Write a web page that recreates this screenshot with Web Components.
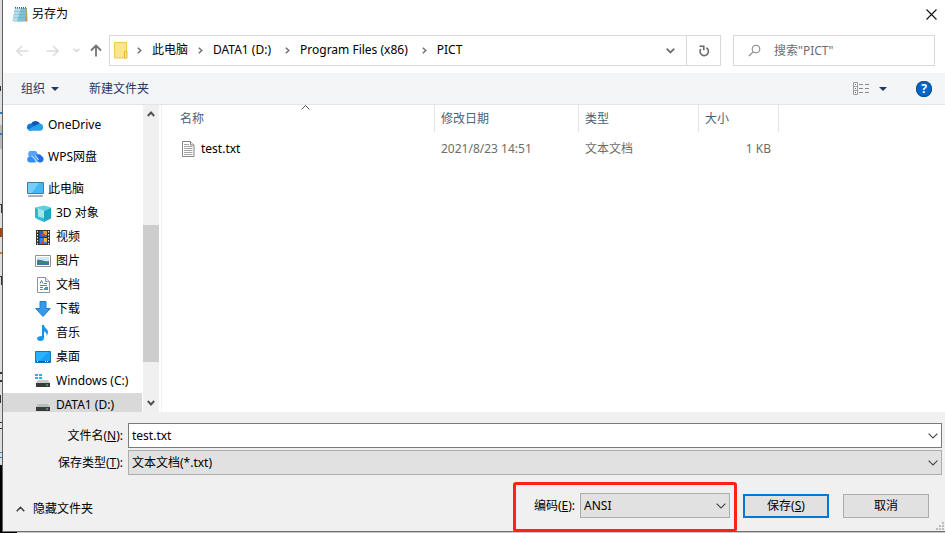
<!DOCTYPE html>
<html lang="zh-CN">
<head>
<meta charset="utf-8">
<title>另存为</title>
<style>
  html, body { margin: 0; height: 100%; }
  body {
    font: 12px/16px "Noto Sans", "Noto Sans CJK SC", sans-serif;
    color: #000;
    overflow: hidden;
  }
</style>
</head>
<body>
<save-desktop></save-desktop>

<script>
const icons = {
  notepad: `<svg width="16" height="17" viewBox="0 0 16 17"><path d="M4 2h11l.500 13.500H2z" fill="#b99a62"/><path d="M3 2h11.500L13 15H.500z" fill="#7fc0d2"/><path d="M3 2h6L5 15H.500z" fill="#b5dfe9"/><path d="M2.500 5.500h11M2.200 8.500h11M1.800 11.500h11" stroke="#66afc5" stroke-width=".5"/><path d="M3.500 1v1.500M5.500 1v1.500M7.500 1v1.500M9.500 1v1.500M11.500 1v1.500M13.500 1v1.500" stroke="#555" stroke-width="1"/></svg>`,
  close: `<svg width="11" height="11" viewBox="0 0 11 11"><path d="M.500.500l10 10M10.500.500l-10 10" stroke="#111" stroke-width="1.100"/></svg>`,
  back: `<svg width="13" height="12" viewBox="0 0 13 12"><path d="M12.500 6H1M6 1L1 6l5 5" fill="none" stroke="#dcdcdc" stroke-width="1.600"/></svg>`,
  forward: `<svg width="13" height="12" viewBox="0 0 13 12"><path d="M.500 6H12M7 1l5 5-5 5" fill="none" stroke="#dcdcdc" stroke-width="1.600"/></svg>`,
  recent: `<svg width="7" height="5" viewBox="0 0 7 5"><path d="M.700.700l2.800 2.800L6.300.700" fill="none" stroke="#d4d4d4" stroke-width="1.400"/></svg>`,
  up: `<svg width="12" height="13" viewBox="0 0 12 13"><path d="M6 12.500V1.500M1 6.500l5-5 5 5" fill="none" stroke="#737373" stroke-width="1.800"/></svg>`,
  folder: `<svg width="14" height="17" viewBox="0 0 14 17"><path d="M.500.500h12v15.500H.500z" fill="#ffe48f" stroke="#f0c94a"/><path d="M10.500 9.500h2.500v6.500h-2.500z" fill="#ffe48f" stroke="#e7b92e"/></svg>`,
  crumb: `<svg width="5" height="7" viewBox="0 0 5 7"><path d="M.800.700l3 2.800-3 2.800" fill="none" stroke="#6b6b6b" stroke-width="1.400"/></svg>`,
  drop: `<svg width="9" height="6" viewBox="0 0 9 6"><path d="M.700.700l3.800 3.800L8.300.700" fill="none" stroke="#6f6f6f" stroke-width="1.800"/></svg>`,
  refresh: `<svg width="12" height="12" viewBox="0 0 12 12"><path d="M8.300 2.800A4.200 4.200 0 1 1 2.800 4" fill="none" stroke="#6b6b6b" stroke-width="1.600"/><path d="M1.500 1.300h4.300v4" fill="none" stroke="#6b6b6b" stroke-width="1.600"/></svg>`,
  search: `<svg width="13" height="13" viewBox="0 0 13 13"><circle cx="8" cy="5" r="3.900" fill="none" stroke="#858585"/><path d="M5.200 7.800L.800 12.200" stroke="#858585" stroke-width="1.200"/></svg>`,
  triangle: `<svg width="8" height="4" viewBox="0 0 8 4"><path d="M0 0h8L4 4z" fill="#1f3864"/></svg>`,
  view: `<svg width="17" height="13" viewBox="0 0 17 13"><path d="M.500.500h4v12h-4zM.500 4.500h4M.500 8.500h4" fill="#fff" stroke="#9a9a9a"/><path d="M2 2.500h1M2 6.500h1" stroke="#668"/><path d="M2 10.500h1" stroke="#a22"/><path d="M6 2.500h4M12 2.500h4M6 6.500h4M12 6.500h4M6 10.500h4M12 10.500h4" stroke="#8a8a8a"/></svg>`,
  onedrive: `<svg width="17" height="11" viewBox="0 0 17 11"><path d="M4 4a5 5 0 0 1 9-.500L9 8 2 6z" fill="#0a58b0"/><path d="M3.800 3.600C1.500 3.600 0 5.200 0 7.200s1.500 3.600 3.600 3.600L10 7z" fill="#0f75d1"/><path d="M13 3.500a3.700 3.700 0 0 1 0 7.300H3.600C2.500 10.800 1.500 10.300.800 9.500L10 4.800z" fill="#28a0ea"/></svg>`,
  wps: `<svg width="17" height="12" viewBox="0 0 17 12"><path d="M1.500 5a4.500 4.500 0 0 1 8.500-3.500L14 11H9z" fill="#55a5fa"/><path d="M8.500 4.500a4 4 0 0 1 6.300.500 3.500 3.500 0 0 1-.800 6.500h-2z" fill="#256fe5"/><path d="M3 5.500a3 3 0 0 0 .500 6H9L5 5.500z" fill="#348df5"/><path d="M4.500 5.500c2 0 3.500 3 5.500 6M8.500 4.500l3 4.500" fill="none" stroke="#e7f3ff"/></svg>`,
  pc: `<svg width="17" height="15" viewBox="0 0 17 15"><path d="M.500.500h16v11H.500z" fill="#42b8f6" stroke="#4a7897"/><path d="M1 1h11L5 11H1z" fill="#75cdfb"/><path d="M1 14h15" stroke="#8d9aa7" stroke-width="1.500"/></svg>`,
  cube: `<svg width="17" height="17" viewBox="0 0 17 17"><path d="M0 2.500l9-2 7 2-7 3.500z" fill="#5cd0df"/><path d="M0 2.500L9 6v11l-9-4z" fill="#a5e6ee"/><path d="M9 6l7-3.500v11L9 17z" fill="#1ba6c4"/><path d="M0 2.500L3 4v10L0 12.500z" fill="#2cb8d0"/><path d="M3 11.500L9 13v4l-7-3z" fill="#35bcd3"/></svg>`,
  video: `<svg width="15" height="15" viewBox="0 0 15 15"><path d="M0 0h14v15H0z" fill="#333"/><path d="M3.500 1h7.500v6H3.500z" fill="#365eb3"/><path d="M3.500 8h7.500v6H3.500z" fill="#4a7bd6"/><path d="M7 1h4v4H8z" fill="#e0a52e"/><path d="M5 4h4v2H5zM5 11h3v3H5z" fill="#bb4d36"/><path d="M8 8h3v4H8z" fill="#e5ba43"/><path d="M1.500 1v14M12.500 1v14" stroke="#eee" stroke-dasharray="1.500 1.500"/></svg>`,
  picture: `<svg width="16" height="12" viewBox="0 0 16 12"><path d="M.500.500h15v11H.500z" fill="#fff" stroke="#929292"/><path d="M2 2h12v8H2z" fill="#cfe9fa"/><path d="M2 5c4-1 7 2 12 1v4H2z" fill="#3f817d"/><path d="M2 9c4-2 8-1 12-1v2H2z" fill="#3f77a8"/></svg>`,
  doc: `<svg width="13" height="16" viewBox="0 0 13 16"><path d="M.500.500h8l4 4v11H.500z" fill="#fff" stroke="#929292"/><path d="M8.500.500v4h4" fill="#eee" stroke="#929292"/><path d="M3 6.500l1.500-3L6 6.500M7 6.500h3M3 8.500h7M3 10.500h3M8 10.500h3M3 12.500h3" fill="none" stroke="#318dcc"/><path d="M7 11h4v2H7z" fill="#4c97b6"/></svg>`,
  down: `<svg width="16" height="16" viewBox="0 0 16 16"><path d="M5 .500h6v7h4.300L8 15.500.700 7.500H5z" fill="#3798ea" stroke="#267cc6"/></svg>`,
  music: `<svg width="12" height="16" viewBox="0 0 12 16"><path d="M5 0h2c0 3 4 4 4 7 0 2-1 3-1.500 4 .500-3-1-4-2.500-4.500V13c0 2-1.500 3-3.500 3S0 15 0 13.500 2 11 5 11z" fill="#1496f0"/></svg>`,
  desktop: `<svg width="16" height="12" viewBox="0 0 16 12"><path d="M.500.500h15v11H.500z" fill="#16a0fa" stroke="#1577bb"/><path d="M1 1h13L4 10H1z" fill="#2fb0ff"/><path d="M1 10.500h14" stroke="#07588f"/><path d="M2 10.500h1M10 10.500h1M12 10.500h1" stroke="#fff"/></svg>`,
  windrive: `<svg width="16" height="14" viewBox="0 0 16 14"><path d="M0 0h3v2H0zM4 0h3v2H4zM0 3h3v2H0zM4 3h3v2H4z" fill="#19b5ee"/><path d="M3 6h10l2 3H1z" fill="#c9c9c9"/><path d="M1 9h14v4H1z" fill="#3b3b3b"/><path d="M11 11h2" stroke="#58e06b"/></svg>`,
  drive: `<svg width="14" height="14" viewBox="0 0 14 14"><path d="M2 6h10l2 3H0z" fill="#bcbcbc"/><path d="M0 9h14v4H0z" fill="#3b3b3b"/><path d="M10 11h2" stroke="#58e06b"/></svg>`,
  text: `<svg width="13" height="16" viewBox="0 0 13 16"><path d="M.500.500h8l3.500 3.500v11.500H.500z" fill="#fff" stroke="#838383"/><path d="M8.500.500v3.500h3.500" fill="#eee" stroke="#838383"/><path d="M2 3.500h5M2 5.500h8.500M2 7.500h8.500M2 9.500h8.500M2 11.500h8.500M2 13.500h8.500" stroke="#a3a3a3"/></svg>`,
  sort: `<svg width="9" height="5" viewBox="0 0 9 5"><path d="M.500 4.500l4-4 4 4" fill="none" stroke="#555"/></svg>`,
  chevron: `<svg width="10" height="6" viewBox="0 0 10 6"><path d="M.600.600L5 5 9.400.600" fill="none" stroke="#444" stroke-width="1.100"/></svg>`,
  scrollUp: `<svg width="8" height="6" viewBox="0 0 8 6"><path d="M.800 5L4 1.500 7.200 5" fill="none" stroke="#505050" stroke-width="1.900"/></svg>`,
  scrollDown: `<svg width="8" height="6" viewBox="0 0 8 6"><path d="M.800 1L4 4.500 7.200 1" fill="none" stroke="#505050" stroke-width="1.900"/></svg>`,
  collapse: `<svg width="9" height="6" viewBox="0 0 9 6"><path d="M.700 5.200l3.800-3.800 3.800 3.800" fill="none" stroke="#404040" stroke-width="1.500"/></svg>`,
  grip: `<svg width="9" height="9" viewBox="0 0 9 9"><path d="M6 0h2v2H6zM3 3h2v2H3zM6 3h2v2H6zM0 6h2v2H0zM3 6h2v2H3zM6 6h2v2H6z" fill="#bdbdbd"/></svg>`
};

const base = `
  * { box-sizing: border-box; }
  button, input, select { font: inherit; color: inherit; margin: 0; border-radius: 0; }
  button { padding: 0; border: 0; background: none; }
`;

function define(name, css, html) {
  const template = document.createElement('template');
  template.innerHTML = `<style>${base}${css}</style>${html}`;
  customElements.define(name, class extends HTMLElement {
    constructor() {
      super();
      this.attachShadow({ mode: 'open' }).append(template.content.cloneNode(true));
    }
  });
}

customElements.define('ui-icon', class extends HTMLElement {
  connectedCallback() {
    if (this.shadowRoot) return;
    this.attachShadow({ mode: 'open' }).innerHTML =
      `<style>:host{display:inline-flex;align-items:center;justify-content:center;flex:none}svg{display:block}</style>${icons[this.getAttribute('name')]}`;
    this.setAttribute('aria-hidden', 'true');
  }
});

define('tree-item', `
  :host { display: block; flex: none; }
  button { display: flex; align-items: center; gap: 4px; width: 100%; height: 24px; padding-left: 23px; text-align: left; white-space: nowrap; }
  :host([child]) button { padding-left: 31px; }
  :host([selected]) button { background: #d9d9d9; }
  ::slotted(ui-icon) { width: 18px; }
`, `<button type="button"><slot name="icon"></slot><span><slot></slot></span></button>`);

define('title-bar', `
  :host { display: flex; align-items: center; height: 28px; padding: 0 8px 0 9px; flex: none; }
  h1 { font: inherit; margin: 0 auto 0 4px; }
  button { display: flex; }
`, `<ui-icon name="notepad"></ui-icon><h1>另存为</h1><button type="button" aria-label="关闭"><ui-icon name="close"></ui-icon></button>`);

define('nav-bar', `
  :host { display: flex; align-items: center; padding: 7px 10px 7px 13px; flex: none; }
  button { display: flex; align-items: center; justify-content: center; white-space: nowrap; }
  .history { display: flex; align-items: center; gap: 14px; padding-right: 7px; }
  .back { margin-right: 3px; }
  .up { margin-left: -4px; }
  .address { display: flex; flex: 1; height: 31px; border: 1px solid #d9d9d9; }
  nav { display: flex; align-items: center; flex: 1; padding-left: 4px; }
  nav button { padding: 0 1px; margin-bottom: 2px; }
  nav .wide { padding-right: 5px; }
  nav ui-icon[name="crumb"] { width: 23px; }
  .drop { width: 32px; }
  .refresh { width: 34px; border-left: 1px solid #d9d9d9; }
  label { display: flex; align-items: center; width: 202px; height: 31px; margin-left: 12px; padding-left: 14px; gap: 13px; border: 1px solid #d9d9d9; }
  input { border: 0; padding: 0; width: 100%; min-width: 0; background: none; outline: 0; }
  input::placeholder { color: #6d6d6d; opacity: 1; }
`, `
  <div class="history">
    <button class="back" type="button" aria-label="后退"><ui-icon name="back"></ui-icon></button>
    <button type="button" aria-label="前进"><ui-icon name="forward"></ui-icon></button>
    <button type="button" aria-label="最近"><ui-icon name="recent"></ui-icon></button>
    <button class="up" type="button" aria-label="向上"><ui-icon name="up"></ui-icon></button>
  </div>
  <div class="address">
    <nav>
      <ui-icon name="folder"></ui-icon>
      <ui-icon name="crumb"></ui-icon><button type="button">此电脑</button>
      <ui-icon name="crumb"></ui-icon><button class="wide" type="button">DATA1 (D:)</button>
      <ui-icon name="crumb"></ui-icon><button class="wide" type="button">Program Files (x86)</button>
      <ui-icon name="crumb"></ui-icon><button type="button">PICT</button>
    </nav>
    <button class="drop" type="button" aria-label="历史位置"><ui-icon name="drop"></ui-icon></button>
    <button class="refresh" type="button" aria-label="刷新"><ui-icon name="refresh"></ui-icon></button>
  </div>
  <label><ui-icon name="search"></ui-icon><input type="text" aria-label="搜索" placeholder='搜索"PICT"'></label>
`);

define('tool-bar', `
  :host { display: flex; align-items: center; height: 32px; padding: 0 13px 0 18px; flex: none; color: #1f3864; background: #f4f5f7; border-bottom: 1px solid #e3e5e8; }
  button { display: flex; align-items: center; gap: 6px; }
  .new { margin: 0 auto 0 30px; }
  .view { gap: 9px; margin-right: 29px; }
  .help { justify-content: center; width: 16px; height: 16px; border-radius: 50%; background: #0067c8; box-shadow: inset 0 0 0 1px #084e8e; color: #fff; font-weight: 700; }
`, `
  <button type="button">组织<ui-icon name="triangle"></ui-icon></button>
  <button class="new" type="button">新建文件夹</button>
  <button class="view" type="button" aria-label="更改视图"><ui-icon name="view"></ui-icon><ui-icon name="triangle"></ui-icon></button>
  <button class="help" type="button">?</button>
`);

define('folder-tree', `
  :host { display: flex; flex: none; width: 159px; overflow: hidden; border-right: 1px solid #f0f0f0; }
  .list { display: flex; flex-direction: column; width: 139px; padding-top: 8px; }
  .top { margin-bottom: 8px; }
  .bar { display: flex; flex-direction: column; align-items: center; width: 16px; margin-left: 1px; background: #f0f0f0; }
  .bar ui-icon { height: 18px; }
  .track { display: grid; grid-template-rows: 102fr 137fr 32fr; flex: 1; width: 100%; }
  .thumb { grid-row: 2; background: #cdcdcd; }
`, `
  <div class="list">
    <tree-item class="top"><ui-icon slot="icon" name="onedrive"></ui-icon>OneDrive</tree-item>
    <tree-item class="top"><ui-icon slot="icon" name="wps"></ui-icon>WPS网盘</tree-item>
    <tree-item><ui-icon slot="icon" name="pc"></ui-icon>此电脑</tree-item>
    <tree-item child><ui-icon slot="icon" name="cube"></ui-icon>3D 对象</tree-item>
    <tree-item child><ui-icon slot="icon" name="video"></ui-icon>视频</tree-item>
    <tree-item child><ui-icon slot="icon" name="picture"></ui-icon>图片</tree-item>
    <tree-item child><ui-icon slot="icon" name="doc"></ui-icon>文档</tree-item>
    <tree-item child><ui-icon slot="icon" name="down"></ui-icon>下载</tree-item>
    <tree-item child><ui-icon slot="icon" name="music"></ui-icon>音乐</tree-item>
    <tree-item child><ui-icon slot="icon" name="desktop"></ui-icon>桌面</tree-item>
    <tree-item child><ui-icon slot="icon" name="windrive"></ui-icon>Windows (C:)</tree-item>
    <tree-item child selected><ui-icon slot="icon" name="drive"></ui-icon>DATA1 (D:)</tree-item>
  </div>
  <div class="bar"><ui-icon name="scrollUp"></ui-icon><div class="track"><div class="thumb"></div></div><ui-icon name="scrollDown"></ui-icon></div>
`);

define('file-list', `
  :host { display: block; flex: 1; overflow: hidden; }
  table { table-layout: fixed; width: 617px; border-spacing: 0; color: #6d6d6d; }
  .name { width: 273px; } .date { width: 144px; } .type { width: 120px; } .size { width: 80px; }
  th { position: relative; height: 27px; padding: 0 6px; text-align: left; font-weight: 400; color: #4c607a; border-right: 1px solid #e5e5e5; }
  td { height: 34px; padding: 0 6px; }
  th:first-child { padding-left: 18px; }
  td:first-child { padding-left: 20px; color: #000; }
  td:last-child { padding-right: 8px; text-align: right; }
  .file { display: flex; align-items: center; gap: 6px; }
  .sort { position: absolute; top: 0; left: 51%; }
`, `
  <table>
    <colgroup><col class="name"><col class="date"><col class="type"><col class="size"></colgroup>
    <thead><tr><th>名称<ui-icon class="sort" name="sort"></ui-icon></th><th>修改日期</th><th>类型</th><th>大小</th></tr></thead>
    <tbody><tr><td><div class="file"><ui-icon name="text"></ui-icon>test.txt</div></td><td>2021/8/23 14:51</td><td>文本文档</td><td>1 KB</td></tr></tbody>
  </table>
`);

define('save-form', `
  :host { display: block; position: relative; flex: none; padding: 11px 3px 0 0; background: #f0f0f0; }
  .row { display: grid; grid-template-columns: 120px 1fr; column-gap: 5px; align-items: center; }
  .row + .row { margin-top: 2px; }
  .row label { text-align: right; }
  .box { display: grid; grid-template-columns: 1fr 14px; align-items: center; height: 25px; }
  .box > * { grid-row: 1; }
  .box input, .box select { grid-column: 1 / 3; width: 100%; height: 25px; padding: 0 18px 0 3px; border: 1px solid #adadad; appearance: none; background: #e1e1e1; outline: 0; }
  .box input { background: #fff; border-color: #7a7a7a; }
  .box ui-icon { grid-column: 2; pointer-events: none; justify-content: flex-start; }
  .actions { display: flex; align-items: center; height: 56px; padding: 5px 13px 0 13px; }
  .hide { display: flex; align-items: center; gap: 8px; margin: 7px auto 0 0; }
  .encoding { position: relative; display: flex; align-items: center; gap: 5px; margin-right: 13px; }
  .encoding::after { content: ""; position: absolute; inset: -11px -7px -14px -21px; border: 3px solid #ff2116; border-radius: 3px; pointer-events: none; }
  .encoding .box { width: 150px; }
  .action { width: 86px; height: 24px; border: 1px solid #adadad; background: #e1e1e1; }
  .save { border: 2px solid #0078d7; margin-right: 14px; }
  .grip { position: absolute; right: 0; bottom: 0; }
`, `
  <div class="row"><label for="name">文件名(<u>N</u>):</label><div class="box"><input id="name" type="text" value="test.txt"><ui-icon name="chevron"></ui-icon></div></div>
  <div class="row"><label for="type">保存类型(<u>T</u>):</label><div class="box"><select id="type"><option>文本文档(*.txt)</option></select><ui-icon name="chevron"></ui-icon></div></div>
  <div class="actions">
    <button class="hide" type="button"><ui-icon name="collapse"></ui-icon>隐藏文件夹</button>
    <div class="encoding"><label for="enc">编码(<u>E</u>):</label><div class="box"><select id="enc"><option>ANSI</option></select><ui-icon name="chevron"></ui-icon></div></div>
    <button class="action save" type="button">保存(<u>S</u>)</button>
    <button class="action" type="button">取消</button>
  </div>
  <ui-icon class="grip" name="grip"></ui-icon>
`);

define('save-dialog', `
  :host { display: flex; flex-direction: column; box-sizing: border-box; min-width: 0; height: calc(100vh - 1px); background: #fff; border-left: 1px solid #5f5f5f; border-bottom: 1px solid #707070; }
  main { display: flex; flex: 1; min-height: 0; }
`, `
  <title-bar></title-bar><nav-bar></nav-bar><tool-bar></tool-bar>
  <main><folder-tree></folder-tree><file-list></file-list></main>
  <save-form></save-form>
`);

define('save-desktop', `
  :host { display: grid; grid-template-columns: 2px 1fr; height: 100vh; background: linear-gradient(to right, #000 17px, #c6c6c6 17px); }
  .edge { display: block; width: 2px; height: 100%; background: #000; }
`, `
  <svg class="edge" viewBox="0 0 2 533" preserveAspectRatio="none" aria-hidden="true">
    <path d="M0 0h2v465H0z" fill="#dedede"/><path d="M0 125h2v24H0z" fill="#b8b8b8"/>
    <path d="M0 86h1v5H0zM0 204h2v1H0zM1 204h1v9H1zM0 276h2v1H0zM1 276h1v9H1zM0 372h2v2H0zM0 380h2v2H0zM0 395h1v8H0zM0 422h2v1H0zM0 428h2v1H0z" fill="#333"/>
    <path d="M0 112h2v2H0zM0 133h2v2H0zM0 452h2v1H0zM0 457h2v1H0z" fill="#2d7dc0"/><path d="M0 228h2v9H0z" fill="#9a4a12"/><path d="M0 252h2v2H0z" fill="#c47a38"/>
  </svg>
  <save-dialog></save-dialog>
`);
</script>
</body>
</html>
